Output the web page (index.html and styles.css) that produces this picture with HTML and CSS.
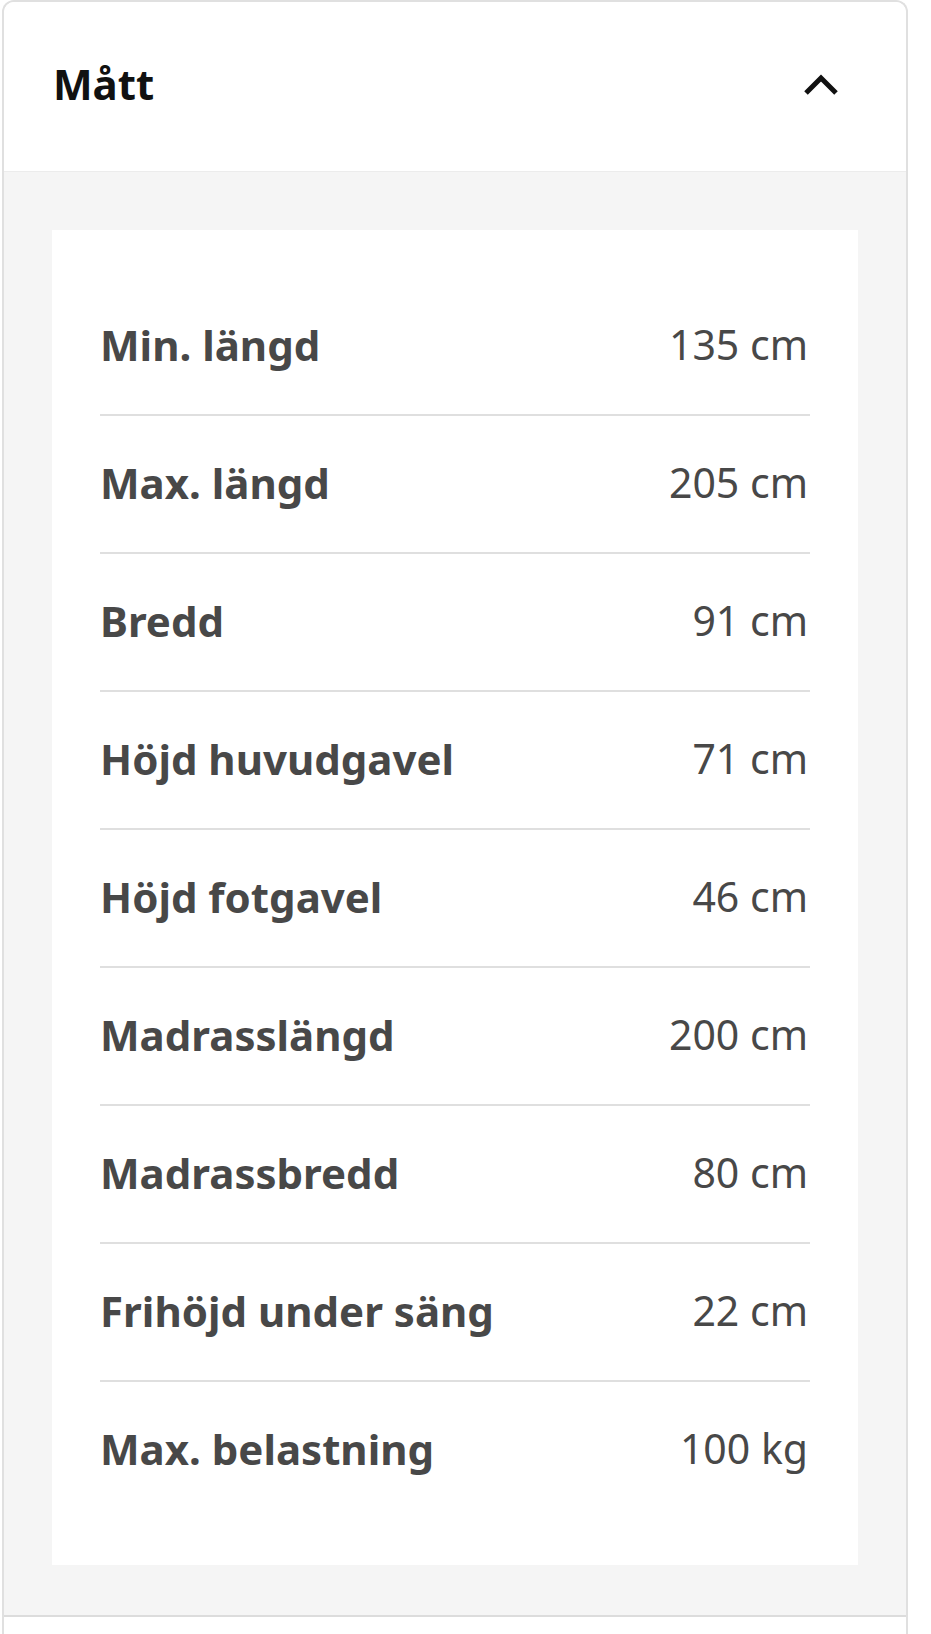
FILE: index.html
```html
<!DOCTYPE html>
<html lang="sv">
<head>
    <meta charset="UTF-8">
    <title>Mått</title>
    <link rel="stylesheet" href="styles.css">
</head>
<body>
    <div class="accordion">
        <div class="accordion-header">
            <h2>Mått</h2>
            <svg class="chevron" width="36" height="24" viewBox="0 0 36 24">
                <polyline points="3,20 18,5 33,20" fill="none" stroke="#111" stroke-width="5"/>
            </svg>
        </div>
        <div class="accordion-body">
            <div class="panel">
                <div class="row"><span class="label">Min. längd</span><span class="value">135 cm</span></div>
                <div class="row"><span class="label">Max. längd</span><span class="value">205 cm</span></div>
                <div class="row"><span class="label">Bredd</span><span class="value">91 cm</span></div>
                <div class="row"><span class="label">Höjd huvudgavel</span><span class="value">71 cm</span></div>
                <div class="row"><span class="label">Höjd fotgavel</span><span class="value">46 cm</span></div>
                <div class="row"><span class="label">Madrasslängd</span><span class="value">200 cm</span></div>
                <div class="row"><span class="label">Madrassbredd</span><span class="value">80 cm</span></div>
                <div class="row"><span class="label">Frihöjd under säng</span><span class="value">22 cm</span></div>
                <div class="row"><span class="label">Max. belastning</span><span class="value">100 kg</span></div>
            </div>
        </div>
        <div class="accordion-next"></div>
    </div>
</body>
</html>
```

FILE: styles.css
```css
body {
    margin: 0;
    background: #fff;
    font-family: "Noto Sans", "Open Sans", sans-serif;
}
.accordion {
    margin-left: 2px;
    width: 906px;
    box-sizing: border-box;
    border: 2px solid #e0e0e0;
    border-bottom: none;
    border-radius: 12px 12px 0 0;
    overflow: hidden;
}
.accordion-header {
    height: 170px;
    box-sizing: border-box;
    display: flex;
    align-items: center;
    justify-content: space-between;
    padding: 0 67px 6px 49px;
    background: #fff;
    border-bottom: 1px solid #ececec;
}
.accordion-header h2 {
    margin: 0;
    font-size: 42px;
    font-weight: 700;
    color: #111;
}
.chevron {
    display: block;
    margin-top: 2px;
}
.accordion-body {
    background: #f5f5f5;
    padding: 58px 48px 50px;
    border-bottom: 2px solid #dcdcdc;
}
.panel {
    background: #fff;
    padding: 48px 48px 47px;
}
.row {
    height: 132px;
    padding-bottom: 4px;
    display: flex;
    align-items: center;
    justify-content: space-between;
    border-bottom: 2px solid #dfdfdf;
    color: #484848;
}
.row:last-child {
    border-bottom: none;
}
.label {
    font-size: 42px;
    font-weight: 700;
}
.value {
    font-size: 41px;
    font-weight: 400;
    padding-right: 2px;
}
.accordion-next {
    height: 40px;
    background: #fff;
}
```
